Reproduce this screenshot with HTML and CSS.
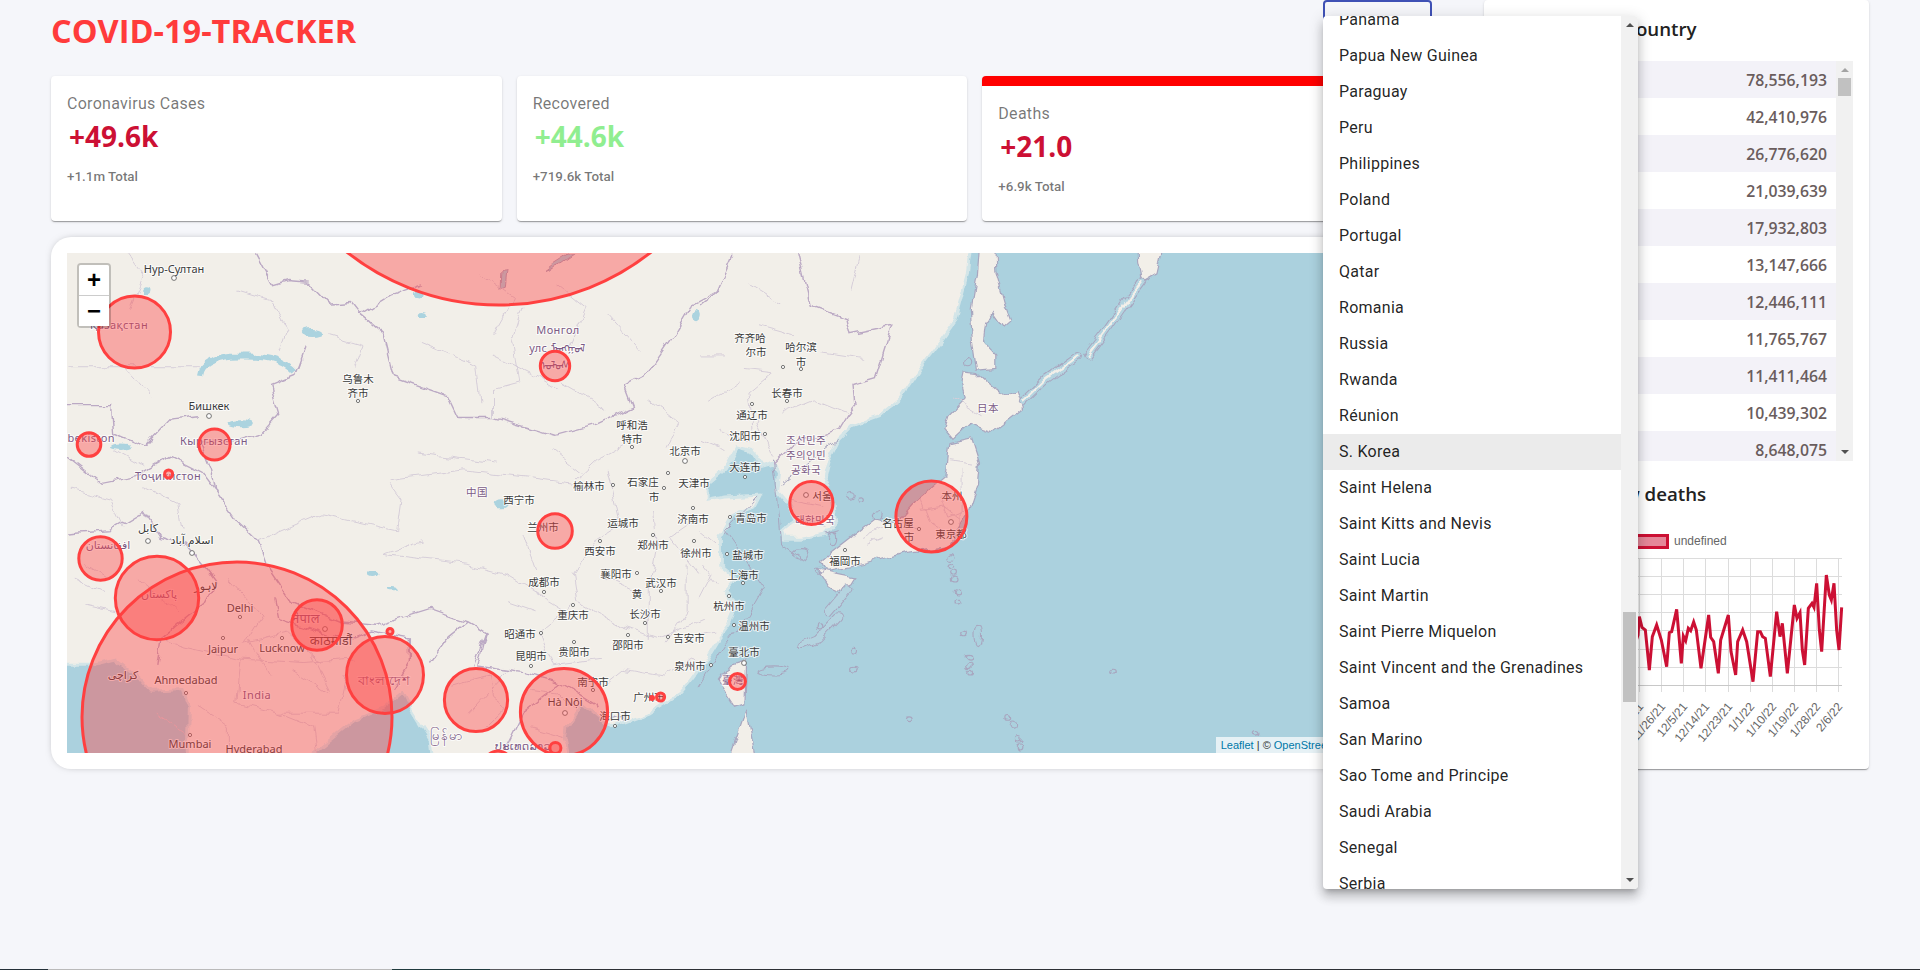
FILE: index.html
```html
<!DOCTYPE html>
<html lang="en">
<head>
<meta charset="utf-8">
<title>COVID-19 Tracker</title>
<link rel="stylesheet" href="styles.css">
</head>
<body>
<div class="app">
  <main class="left">
    <header class="header">
      <h1 class="title">COVID-19-TRACKER</h1>
      <div class="select-btn">Worldwide</div>
    </header>
    <section class="stats">
      <article class="card">
        <div class="card-label">Coronavirus Cases</div>
        <div class="card-num red">+49.6k</div>
        <div class="card-total">+1.1m Total</div>
      </article>
      <article class="card">
        <div class="card-label">Recovered</div>
        <div class="card-num green">+44.6k</div>
        <div class="card-total">+719.6k Total</div>
      </article>
      <article class="card card-active">
        <div class="card-label">Deaths</div>
        <div class="card-num red">+21.0</div>
        <div class="card-total">+6.9k Total</div>
      </article>
    </section>
    <section class="map-card">
      <div class="map">
        <svg class="map-svg" viewBox="0 0 1350 500" xmlns="http://www.w3.org/2000/svg">
          <defs>
            <filter id="wiggle" filterUnits="userSpaceOnUse" x="-30" y="-30" width="1410" height="560">
              <feTurbulence type="fractalNoise" baseFrequency=".07" numOctaves="2" seed="4" result="n"/>
              <feDisplacementMap in="SourceGraphic" in2="n" scale="9" xChannelSelector="R" yChannelSelector="G"/>
            </filter>
          </defs>
          <rect class="bg-land" x="-30" y="-30" width="1410" height="560"/>
          <g filter="url(#wiggle)">
          <!-- left half, geography -->
          <g transform="matrix(.4209 0 0 .338 -7 -13)">
            <path class="sea" d="M-80,1255 L80,1255 130,1240 190,1300 215,1335 290,1330 305,1380 300,1640 -80,1640Z"/>
            <path class="sea" d="M590,1640 L590,1530 700,1420 770,1385 815,1340 835,1390 880,1480 895,1640Z"/>
            <path class="lake-line" d="M335,402 Q340,345 430,345 Q520,340 558,392"/>
            <ellipse class="lake" cx="428" cy="542" rx="30" ry="12"/>
            <ellipse class="lake" cx="600" cy="272" rx="28" ry="12"/>
            <ellipse class="lake" cx="850" cy="162" rx="14" ry="14"/>
            <ellipse class="lake" cx="862" cy="218" rx="12" ry="8"/>
            <ellipse class="lake" cx="1512" cy="225" rx="8" ry="18"/>
            <ellipse class="lake" cx="1050" cy="782" rx="16" ry="12"/>
            <ellipse class="lake" cx="742" cy="990" rx="12" ry="10"/>
            <ellipse class="lake" cx="790" cy="1030" rx="12" ry="6"/>
            <ellipse class="lake" cx="145" cy="610" rx="24" ry="8"/>
            <ellipse class="lake" cx="205" cy="150" rx="10" ry="10"/>
            <path class="baikal" d="M1150,90 L1190,70 1225,40 1205,42 1170,70Z"/>
            <path class="baikal" d="M1050,90 L1062,88 1058,140 1048,145Z"/>
            <path class="land" d="M1285,1425 L1335,1405 1345,1450 1320,1500 1285,1500Z"/>
            <path class="border-main" d="M465,38 L505,132 540,120 590,125 640,190 690,185 712,220 790,160 860,130"/>
            <path class="border-main" d="M712,220 L770,280 795,405 920,460 945,525 1030,525 1175,578 1275,545 1360,495 1340,430 1400,390 1460,280 1500,195 1568,150"/>
            <path class="border-main" d="M585,315 L560,400 500,430 520,515 480,570 415,595 335,600 360,680 370,740 420,830 470,890 490,960 550,1070 670,1130 750,1140 880,1090 970,1130 1010,1160 980,1260"/>
            <path class="border-main" d="M17,490 L120,490 125,570 200,610 260,530 330,520"/>
            <path class="border-main" d="M17,640 L100,720 180,700 260,640 340,690 370,740"/>
            <path class="border-main" d="M17,870 L120,860 200,800 240,880 300,900 340,960 370,1010 340,1080 240,1180 230,1260"/>
            <path class="border-main" d="M510,1060 L520,1120 640,1170 700,1180 740,1160 830,1180 830,1250 790,1330"/>
            <path class="border-main" d="M880,1250 L920,1180 970,1130"/>
            <path class="border-main" d="M1010,1160 L990,1260 1100,1280 1190,1310 1280,1380"/>
            <path class="border-main" d="M1060,1500 L1100,1400 1190,1310"/>
            <path class="border-thin" d="M20,375 L330,375 M155,380 L220,470 M970,1400 L1060,1280 M1030,525 L1030,440 1090,420 1075,300 1100,200 M855,300 L990,370 1000,480 M780,710 L960,680 1100,700 1220,720 1280,650 1340,610 M850,630 L1040,660 M780,720 L810,770 800,860 620,810 470,890 M860,890 L770,930 970,960 1060,990 1190,1090 M1300,680 L1330,840 1280,880 1220,990 1230,1070 1330,1140 1420,1180 1530,1120 M1410,800 L1420,910 1400,1040 1400,1180 M1220,1080 L1140,1160 1170,1260 1290,1240 M30,1000 L100,1040 M130,1100 L60,1080 M400,1000 L480,1110 440,1190 540,1160 620,1250 M240,1180 L290,1200 430,1240 580,1250 700,1240 M430,1240 L420,1370 520,1400 660,1400 680,1290 M520,1400 L600,1440 610,1517 M330,1380 L400,1440 400,1517 M600,1230 L640,1330"/>
            <path class="border-thin" d="M1300,1310 L1340,1270 1430,1290 1500,1240 1540,1270 M1490,960 L1490,1100 1440,1190"/>
            <path class="border-thin" d="M1120,1330 L1180,1340 1230,1400 M930,1320 L1020,1290 1030,1350 1060,1380 1010,1440 M1120,1440 L1200,1470"/>
            <path class="border-thin" d="M420,150 L500,180 540,260 520,330 M160,40 L200,110 170,200 M640,280 L720,310 700,380 M1000,100 L1080,170 1030,280 M1180,130 L1250,200 1210,320 M1300,220 L1380,330 M1030,340 L1130,400 1180,440 M1190,420 L1300,500 M1400,470 L1470,540 1440,620 M1170,620 L1240,690 M30,740 L120,770 150,850 M200,730 L280,780 290,860 M130,620 L200,670 M1100,870 L1130,980 M1060,1070 L1130,1100 M1300,1000 L1390,1050 M1520,820 L1450,880 1520,990 M60,960 L110,1000 M180,1000 L280,1100 M550,1270 L640,1340 M450,1180 L500,1290 M230,1400 L300,1460"/>
          </g>
          <!-- right half, geography -->
          <g transform="matrix(.408 0 0 .338 633 -13)">
            <path class="sea" d="M662,-60 L662,30 655,100 640,170 625,240 590,300 545,370 490,470 440,520 375,548 340,590 315,650 305,700 325,760 335,835 310,870 250,885 205,885 200,860 235,825 215,780 190,745 195,690 180,660 150,670 125,625 90,615 60,680 20,720 20,770 60,760 145,755 130,790 80,815 50,880 50,960 90,1000 60,1040 90,1080 70,1140 40,1190 10,1250 -20,1300 -52,1345 -124,1400 -217,1440 -258,1400 -290,1370 -325,1440 -330,1470 -300,1640 1800,1640 1800,-60Z"/>
            <path class="maritime" d="M0,1320 L60,1200 120,1110 158,1030 60,860 140,760 M340,590 L200,720 M180,650 L190,760 200,900 250,945 M310,870 L340,860"/>
            <path class="land" d="M720,-60 L725,90 750,200 762,240 745,258 720,215 700,250 695,300 725,340 725,380 680,385 670,300 665,200 680,100 690,-60Z"/>
            <path class="land" d="M645,390 L680,395 740,460 775,445 790,500 715,570 660,545 620,590 600,560 610,520 650,470 640,420Z"/>
            <path class="land" d="M610,600 L665,585 685,660 680,720 650,830 610,910 500,925 400,960 310,980 300,945 370,880 430,825 480,840 530,770 600,700Z"/>
            <path class="land" d="M320,985 L380,1000 370,1020 340,1040 320,1030 290,975Z"/>
            <path class="land" d="M1070,-60 L1150,-60 1120,100 1085,125 1075,60Z"/>
            <path class="land" d="M75,1255 L115,1240 110,1370 85,1380 45,1305Z"/>
            <path class="land" d="M75,1640 L75,1530 115,1390 135,1530 135,1640Z"/>
            <path class="island-out" d="M790,480 L850,410 925,345 M950,340 L1000,260 1040,190 1080,125 M360,1035 L315,1100 M340,1115 L290,1180 250,1200"/>
            <path class="island-sea" d="M790,480 L850,410 925,345 M950,340 L1000,260 1040,190 1080,125 M360,1035 L315,1100 M340,1115 L290,1180 250,1200"/>
            <path class="island-in" d="M790,480 L850,410 925,345 M950,340 L1000,260 1040,190 1080,125"/>
            <path class="border-main" d="M0,195 L40,160 80,50 75,-60 M240,-60 L240,38 270,190 360,230 370,280 470,255 430,410 375,430 380,490 360,520 340,560 300,580 230,600 180,660"/>
            <path class="border-thin" d="M0,340 L60,340 M110,380 L180,390 120,450 130,560 M200,510 L280,470 360,510 M390,50 L370,150 M640,680 L640,850 M540,800 L600,790 640,830 M400,880 L450,850 M0,860 L40,900 M0,590 L60,620 M30,990 L0,1060 M0,1170 L40,1160"/>
            <path class="border-thin" d="M540,770 L560,830 600,860 M590,760 L610,820 650,800 M500,830 L540,860 M410,900 L450,880 M215,770 L300,790 M240,830 L310,850 M620,470 L690,520 M610,650 L670,660 M120,130 L200,190 M20,480 L100,420 M140,250 L230,280 M290,330 L400,350 M140,530 L180,640 M50,560 L120,600 M0,960 L40,1020"/>
            <g class="isles">
              <ellipse cx="367" cy="757" rx="11" ry="10"/><ellipse cx="395" cy="768" rx="8" ry="8"/><ellipse cx="432" cy="812" rx="12" ry="14"/>
              <ellipse cx="615" cy="938" rx="10" ry="10"/><ellipse cx="615" cy="965" rx="7" ry="8"/><ellipse cx="619" cy="987" rx="7" ry="8"/><ellipse cx="623" cy="1005" rx="7" ry="7"/>
              <ellipse cx="630" cy="1042" rx="7" ry="8"/><ellipse cx="631" cy="1070" rx="6" ry="7"/><ellipse cx="646" cy="1167" rx="7" ry="7"/><ellipse cx="682" cy="1170" rx="8" ry="30"/>
              <ellipse cx="378" cy="1218" rx="8" ry="10"/><ellipse cx="376" cy="1271" rx="7" ry="7"/><ellipse cx="657" cy="1236" rx="7" ry="7"/><ellipse cx="658" cy="1260" rx="7" ry="8"/><ellipse cx="662" cy="1280" rx="6" ry="7"/>
              <ellipse cx="1011" cy="1277" rx="7" ry="7"/><ellipse cx="513" cy="1418" rx="7" ry="7"/><ellipse cx="758" cy="1414" rx="6" ry="7"/><ellipse cx="768" cy="1438" rx="8" ry="12"/><ellipse cx="780" cy="1477" rx="7" ry="8"/><ellipse cx="782" cy="1500" rx="7" ry="9"/>
              <ellipse cx="1363" cy="1458" rx="7" ry="7"/><ellipse cx="180" cy="1272" rx="40" ry="12"/><ellipse cx="294" cy="1143" rx="7" ry="8"/><ellipse cx="656" cy="360" rx="10" ry="12"/><ellipse cx="245" cy="930" rx="18" ry="14"/><ellipse cx="325" cy="885" rx="10" ry="20"/><ellipse cx="295" cy="980" rx="10" ry="12"/>
            </g>
          </g>
          </g>
          <!-- labels -->
          <g class="cities">
            <text x="107" y="20">Нур-Султан</text><text x="142" y="157">Бишкек</text>
            <text x="173" y="359">Delhi</text><text x="156" y="400">Jaipur</text><text x="215" y="399">Lucknow</text><text x="119" y="431">Ahmedabad</text><text x="123" y="495">Mumbai</text><text x="187" y="500">Hyderabad</text>
            <text x="81" y="279">كابل</text><text x="125" y="291">اسلام آباد</text><text x="139" y="337">لاہور</text><text x="56" y="426">کراچی</text><text class="big" x="264" y="392">काठमाडौं</text>
            <text x="498" y="453">Hà Nội</text>
          </g>
          <g class="cities cjk">
            <text x="291" y="130">乌鲁木</text><text x="291" y="144">齐市</text><text x="565" y="176">呼和浩</text><text x="565" y="190">特市</text><text x="618" y="202">北京市</text><text x="522" y="237">榆林市</text><text x="576" y="233">石家庄</text><text x="587" y="248">市</text><text x="627" y="234">天津市</text><text x="452" y="251">西宁市</text><text x="476" y="278">兰州市</text><text x="556" y="274">运城市</text><text x="626" y="270">济南市</text><text x="586" y="296">郑州市</text><text x="533" y="302">西安市</text><text x="629" y="304">徐州市</text><text x="549" y="325">襄阳市</text><text x="594" y="334">武汉市</text><text x="570" y="345">黄</text><text x="477" y="333">成都市</text><text x="506" y="366">重庆市</text><text x="578" y="365">长沙市</text><text x="453" y="385">昭通市</text><text x="622" y="389">吉安市</text><text x="561" y="396">邵阳市</text><text x="464" y="407">昆明市</text><text x="507" y="403">贵阳市</text><text x="623" y="417">泉州市</text><text x="526" y="433">南宁市</text><text x="582" y="448">广州市</text><text x="548" y="467">海口市</text>
            <text x="683" y="89">齐齐哈</text><text x="689" y="103">尔市</text><text x="734" y="98">哈尔滨</text><text x="734" y="113">市</text><text x="720" y="144">长春市</text><text x="685" y="166">通辽市</text><text x="678" y="187">沈阳市</text><text x="678" y="218">大连市</text><text x="755" y="247">서울</text><text x="684" y="269">青岛市</text><text x="681" y="306">盐城市</text><text x="676" y="326">上海市</text><text x="662" y="357">杭州市</text><text x="687" y="377">温州市</text><text x="677" y="403">臺北市</text><text x="778" y="312">福岡市</text><text x="831" y="274">名古屋</text><text x="842" y="288">市</text><text x="885" y="247">本州</text><text x="884" y="285">東京都</text>
          </g>
          <g class="countries">
            <text x="52" y="76">Қазақстан</text><text x="491" y="81">Монгол</text><text x="490" y="99">улс ᠮᠤᠩᠭᠤᠯ</text><text x="488" y="116">ᠤᠯᠤᠰ</text><text x="147" y="192">Кыргызстан</text><text class="end" x="48" y="189">Oʻzbekiston</text><text x="101" y="227">Тоҷикистон</text><text x="41" y="296">افغانستان</text><text x="92" y="345">پاکستان</text><text class="big" x="239" y="370">नेपाल</text><text class="big" x="317" y="432">বাংলাদেশ</text><text x="190" y="446">India</text><text class="big" x="380" y="487">မြန်မာ</text><text x="456" y="497">ປະເທດລາວ</text>
          </g>
          <g class="countries cjk">
            <text x="410" y="243">中国</text><text x="739" y="191">조선민주</text><text x="739" y="206">주의인민</text><text x="739" y="221">공화국</text><text x="748" y="271">대한민국</text><text x="666" y="431">臺灣</text><text x="921" y="159">日本</text>
          </g>
          <g class="dots">
            <circle cx="107" cy="25" r="2.4"/><circle cx="142" cy="163" r="2.4"/><circle cx="618" cy="208" r="2.4"/><circle cx="291" cy="148" r="1.6"/><circle cx="565" cy="194" r="1.6"/><circle cx="81" cy="288" r="2.4"/><circle cx="125" cy="300" r="2.4"/><circle cx="173" cy="364" r="1.6"/><circle cx="156" cy="385" r="1.6"/><circle cx="215" cy="385" r="1.6"/><circle cx="119" cy="440" r="1.6"/><circle cx="123" cy="482" r="1.6"/><circle cx="258" cy="376" r="2.4"/><circle cx="498" cy="460" r="2.4"/><circle cx="739" cy="242" r="2.4"/><circle cx="884" cy="269" r="2.4"/><circle cx="677" cy="410" r="2.4"/><circle cx="716" cy="114" r="1.6"/><circle cx="734" cy="116" r="1.6"/><circle cx="720" cy="148" r="1.6"/><circle cx="685" cy="151" r="1.6"/><circle cx="698" cy="181" r="1.6"/><circle cx="678" cy="224" r="1.6"/><circle cx="663" cy="264" r="1.6"/><circle cx="660" cy="301" r="1.6"/><circle cx="676" cy="330" r="1.6"/><circle cx="662" cy="343" r="1.6"/><circle cx="667" cy="372" r="1.6"/><circle cx="778" cy="297" r="1.6"/><circle cx="852" cy="276" r="1.6"/><circle cx="601" cy="220" r="1.6"/><circle cx="546" cy="232" r="1.6"/><circle cx="597" cy="235" r="1.6"/><circle cx="626" cy="255" r="1.6"/><circle cx="586" cy="282" r="1.6"/><circle cx="533" cy="288" r="1.6"/><circle cx="627" cy="288" r="1.6"/><circle cx="570" cy="320" r="1.6"/><circle cx="594" cy="338" r="1.6"/><circle cx="477" cy="339" r="1.6"/><circle cx="506" cy="352" r="1.6"/><circle cx="578" cy="370" r="1.6"/><circle cx="474" cy="380" r="1.6"/><circle cx="601" cy="384" r="1.6"/><circle cx="561" cy="382" r="1.6"/><circle cx="464" cy="413" r="1.6"/><circle cx="507" cy="389" r="1.6"/><circle cx="644" cy="412" r="1.6"/><circle cx="526" cy="437" r="1.6"/><circle cx="548" cy="473" r="1.6"/>
          </g>
          <!-- case circles -->
          <g class="bubbles">
            <circle cx="432" cy="-193" r="245"/><circle cx="170" cy="464" r="155"/><circle cx="67.5" cy="79" r="36"/><circle cx="488" cy="113" r="14.7"/><circle cx="22" cy="191.5" r="11.8"/><circle cx="147.5" cy="191.5" r="15.6"/><circle cx="101.6" cy="221" r="4"/><circle cx="33.5" cy="305.5" r="21.7"/><circle cx="90" cy="345" r="41.7"/><circle cx="250" cy="372" r="25.3"/><circle cx="323" cy="378.5" r="3"/><circle cx="318" cy="422" r="38.5"/><circle cx="409" cy="447" r="31.6"/><circle cx="497" cy="459" r="43.6"/><circle cx="488.4" cy="495" r="5.5"/><circle cx="431" cy="512" r="14"/><circle cx="488" cy="278" r="17.3"/><circle cx="593.6" cy="444" r="4"/><circle cx="585" cy="445" r="1.5"/><circle cx="744.4" cy="250" r="21.6"/><circle cx="864.4" cy="263.5" r="35.5"/><circle cx="670.5" cy="428.5" r="8"/>
          </g>
        </svg>
        <div class="zoom">
          <div class="zoom-btn zoom-in">+</div>
          <div class="zoom-btn">−</div>
        </div>
        <div class="attribution"><span class="link">Leaflet</span> | © <span class="link">OpenStreetMap</span> contributors</div>
      </div>
    </section>
  </main>

  <aside class="side">
    <h3 class="side-title">Live Cases by Country</h3>
    <div class="table-wrap">
      <div class="table">
        <div class="row"><span>USA</span><strong>78,556,193</strong></div>
        <div class="row"><span>India</span><strong>42,410,976</strong></div>
        <div class="row"><span>Brazil</span><strong>26,776,620</strong></div>
        <div class="row"><span>France</span><strong>21,039,639</strong></div>
        <div class="row"><span>UK</span><strong>17,932,803</strong></div>
        <div class="row"><span>Russia</span><strong>13,147,666</strong></div>
        <div class="row"><span>Turkey</span><strong>12,446,111</strong></div>
        <div class="row"><span>Italy</span><strong>11,765,767</strong></div>
        <div class="row"><span>Germany</span><strong>11,411,464</strong></div>
        <div class="row"><span>Spain</span><strong>10,439,302</strong></div>
        <div class="row"><span>Argentina</span><strong>8,648,075</strong></div>
      </div>
      <div class="scrollbar">
        <i class="arrow-up"></i>
        <i class="thumb table-thumb"></i>
        <i class="arrow-down"></i>
      </div>
    </div>
    <h3 class="side-title second">Worldwide new deaths</h3>
    <svg class="chart" viewBox="0 0 353 225" xmlns="http://www.w3.org/2000/svg">
      <rect class="swatch" x="129" y="15.5" width="38.5" height="12"/>
      <text class="legend" x="174" y="25">undefined</text>
      <path class="grid" d="M48,38.5H342M48,56.5H342M48,74.5H342M48,92.5H342M48,110.5H342M48,129.5H342M48,147.5H342"/>
      <path class="grid" d="M51.5,38V172M73.5,38V172M95.5,38V172M117.5,38V172M139.5,38V172M161.5,38V172M183.5,38V172M205.5,38V172M228.5,38V172M250.5,38V172M272.5,38V172M294.5,38V172M316.5,38V172M338.5,38V172"/>
      <path class="axis" d="M48,165.5H342"/>
      <g transform="translate(120 0) scale(.33333)">
        <path class="line" d="M-200,380 L-140,300 -90,430 -40,320 0,400 30,420 54,345 58,290 66,322 76,330 88,450 97,350 110,315 124,360 140,440 148,338 155,335 170,268 184,430 190,348 197,362 205,325 212,332 221,306 229,330 243,445 266,285 272,352 281,365 295,460 302,360 325,285 333,395 347,465 353,365 368,330 380,365 399,485 413,335 421,335 428,350 436,355 451,470 470,275 480,350 487,310 502,460 523,255 531,295 540,278 547,390 554,435 565,265 576,250 582,262 590,190 598,330 605,395 619,165 628,225 634,240 642,190 650,330 657,390 665,262"/>
      </g>
      <g class="ticks">
        <text transform="translate(144 187) rotate(-50)">11/17/21</text>
        <text transform="translate(166 187) rotate(-50)">11/26/21</text>
        <text transform="translate(188 187) rotate(-50)">12/5/21</text>
        <text transform="translate(210 187) rotate(-50)">12/14/21</text>
        <text transform="translate(233 187) rotate(-50)">12/23/21</text>
        <text transform="translate(255 187) rotate(-50)">1/1/22</text>
        <text transform="translate(277 187) rotate(-50)">1/10/22</text>
        <text transform="translate(299 187) rotate(-50)">1/19/22</text>
        <text transform="translate(321 187) rotate(-50)">1/28/22</text>
        <text transform="translate(343 187) rotate(-50)">2/6/22</text>
      </g>
    </svg>
  </aside>
</div>

<div class="strip">
  <i class="seg seg-a"></i><i class="seg seg-b"></i><i class="seg seg-c"></i><i class="seg seg-d"></i><i class="seg seg-e"></i>
</div>

<div class="menu">
  <div class="menu-list">
    <ul class="menu-items">
      <li>Panama</li><li>Papua New Guinea</li><li>Paraguay</li><li>Peru</li><li>Philippines</li><li>Poland</li><li>Portugal</li><li>Qatar</li><li>Romania</li><li>Russia</li><li>Rwanda</li><li>Réunion</li><li class="hover">S. Korea</li><li>Saint Helena</li><li>Saint Kitts and Nevis</li><li>Saint Lucia</li><li>Saint Martin</li><li>Saint Pierre Miquelon</li><li>Saint Vincent and the Grenadines</li><li>Samoa</li><li>San Marino</li><li>Sao Tome and Principe</li><li>Saudi Arabia</li><li>Senegal</li><li>Serbia</li>
    </ul>
  </div>
  <div class="scrollbar menu-bar">
    <i class="arrow-up"></i>
    <i class="thumb menu-thumb"></i>
    <i class="arrow-down"></i>
  </div>
</div>
</body>
</html>
```

FILE: styles.css
```css
* { box-sizing: border-box; }
html, body { margin: 0; padding: 0; height: 970px; overflow: hidden; }
body { background: #f5f6fa; font-family: Roboto, "Liberation Sans", sans-serif; display: flex; flex-direction: column; }

.app { flex: 1; display: flex; gap: 51px; padding: 0 51px; min-height: 0; }
.left { flex: 1; min-width: 0; }

.header { height: 76px; display: flex; justify-content: space-between; align-items: flex-start; }
.title { margin: 11px 0 0; font-family: "Open Sans", sans-serif; font-size: 32.5px; line-height: 40px; font-weight: 700; color: #ff3b3b; }
.select-btn { width: 109px; height: 56px; margin-right: 1px; border: 2px solid #3f51b5; border-radius: 4px; padding: 16px 12px; font-size: 16px; color: #222; }

.stats { display: flex; gap: 15px; }
.card { flex: 1; height: 145px; background: #fff; border-radius: 4px; padding: 16px; box-shadow: 0 2px 1px -1px rgba(0,0,0,.2), 0 1px 1px 0 rgba(0,0,0,.14), 0 1px 3px 0 rgba(0,0,0,.12); }
.card-active { border-top: 10px solid #f00; }
.card-label { font-size: 16px; line-height: 24px; color: rgba(0,0,0,.54); letter-spacing: .28px; }
.card-num { font-family: "Open Sans", sans-serif; font-weight: 700; font-size: 28px; line-height: 38px; margin: 1px 0 0 2px; }
.red { color: #cc1034; }
.green { color: #90ee90; }
.card-total { margin-top: 12px; font-size: 13.4px; line-height: 20px; font-weight: 500; color: rgba(0,0,0,.54); letter-spacing: 0; }

.map-card { margin-top: 16px; height: 532px; background: #fff; border-radius: 20px; padding: 16px; box-shadow: 0 0 8px -4px rgba(0,0,0,.5); }
.map { position: relative; height: 500px; overflow: hidden; background: #aad3df; }
.map-svg { display: block; width: 100%; height: 500px; }
.bg-land { fill: #f2efe9; }
.sea { fill: #abd1de; stroke: #d3e5e8; stroke-width: 3; vector-effect: non-scaling-stroke; }
.lake { fill: #abd3df; }
.lake-line { fill: none; stroke: #abd3df; stroke-width: 6; vector-effect: non-scaling-stroke; }
.baikal { fill: #abd3df; stroke: #a99fb8; vector-effect: non-scaling-stroke; }
.land { fill: #f2efe9; stroke: #a8a6bf; stroke-width: 1.2; vector-effect: non-scaling-stroke; }
.maritime { fill: none; stroke: #a8a6bf; stroke-width: 1; vector-effect: non-scaling-stroke; }
.island-out { fill: none; stroke: #a8a6bf; stroke-width: 9; stroke-linecap: round; vector-effect: non-scaling-stroke; }
.island-sea { fill: none; stroke: #b4d4e0; stroke-width: 7; stroke-linecap: round; vector-effect: non-scaling-stroke; }
.island-in { fill: none; stroke: #f2efe9; stroke-width: 2.5; stroke-linecap: round; vector-effect: non-scaling-stroke; }
.border-main { fill: none; stroke: #bba9c4; stroke-width: 1.4; vector-effect: non-scaling-stroke; }
.border-thin { fill: none; stroke: #d6ced9; stroke-width: 1; vector-effect: non-scaling-stroke; }
.isles ellipse { fill: none; stroke: #a8a6bf; stroke-width: 1.1; vector-effect: non-scaling-stroke; }
.cities text, .countries text { font-family: "Noto Sans", "DejaVu Sans", sans-serif; font-size: 11px; text-anchor: middle; paint-order: stroke; stroke: rgba(255,255,255,.75); stroke-width: 2px; stroke-linejoin: round; }
.cities text.big, .countries text.big { font-size: 13px; }
.cjk text { font-family: "Noto Sans CJK SC", "Noto Sans CJK KR", sans-serif; font-size: 10.5px; }
.cities text { fill: #3a3a3a; }
.countries text { fill: #7b5a85; letter-spacing: .4px; }
.countries text.end { text-anchor: end; }
.dots circle { fill: #fff; stroke: #555; stroke-width: .8; }
.bubbles circle { fill: #ff4040; fill-opacity: .4; stroke: #ff4040; stroke-width: 3; }

.zoom { position: absolute; left: 10px; top: 10px; width: 34px; border: 2px solid rgba(0,0,0,.2); border-radius: 4px; background-clip: padding-box; }
.zoom-btn { height: 30px; background: #fff; color: #000; font: bold 24px/30px "Liberation Sans", sans-serif; text-align: center; }
.zoom-in { border-bottom: 1px solid #ccc; height: 31px; border-radius: 2px 2px 0 0; }
.attribution { position: absolute; right: 0; bottom: 0; padding: 0 5px; background: rgba(255,255,255,.7); color: #333; font: 11px/16px "Liberation Sans", sans-serif; }
.link { color: #0078a8; }

.side { width: 385px; height: 769px; background: #fff; border-radius: 4px; padding: 15px 16px 16px; box-shadow: 0 2px 1px -1px rgba(0,0,0,.2), 0 1px 1px 0 rgba(0,0,0,.14), 0 1px 3px 0 rgba(0,0,0,.12); }
.side-title { margin: 0 0 18px; font-family: "Open Sans", sans-serif; font-size: 18.72px; line-height: 28px; font-weight: 600; color: #222; }
.side-title.second { margin: 19px 0 12px; }
.table-wrap { display: flex; height: 400px; overflow: hidden; }
.table { flex: 1; min-width: 0; }
.row { height: 37px; display: flex; justify-content: space-between; align-items: center; padding: 0 9px; font-family: "Open Sans", sans-serif; font-size: 15.8px; color: #6a5d5d; }
.row:nth-child(odd) { background: #f3f2f8; }
.row strong { font-weight: 600; }

.scrollbar { flex: none; width: 17px; background: #f1f1f1; display: flex; flex-direction: column; align-items: center; }
.arrow-up, .arrow-down { flex: none; width: 0; height: 0; border-left: 4px solid transparent; border-right: 4px solid transparent; }
.arrow-up { margin-top: 7px; border-bottom: 4px solid #a3a3a3; }
.arrow-down { margin-top: auto; margin-bottom: 7px; border-top: 4px solid #505050; }
.thumb { flex: none; width: 13px; background: #c1c1c1; }
.table-thumb { height: 18px; margin-top: 6px; }
.menu-bar .arrow-up { border-bottom-color: #505050; }
.menu-thumb { height: 90px; margin-top: 585px; }

.chart { display: block; width: 353px; height: 225px; }
.swatch { fill: rgba(204,16,52,.5); stroke: #cc1034; stroke-width: 3; }
.legend, .ticks text { font-family: "Liberation Sans", sans-serif; font-size: 12px; fill: #666; }
.ticks text { text-anchor: end; }
.grid { fill: none; stroke: #dcdcdc; stroke-width: 1; }
.axis { fill: none; stroke: #c8c8c8; stroke-width: 1; }
.line { fill: none; stroke: #cc1034; stroke-width: 3; stroke-linejoin: miter; vector-effect: non-scaling-stroke; }

.strip { flex: none; height: 1px; display: flex; }
.seg { display: block; height: 1px; }
.seg-a { width: 48px; background: #243038; }
.seg-b { width: 344px; background: #bababa; }
.seg-c { width: 98px; background: #1f3a3d; }
.seg-d { width: 50px; background: #5c5c60; }
.seg-e { flex: 1; background: #2d3035; }

.menu { position: absolute; left: 1323px; top: 16px; width: 315px; height: 873px; display: flex; background: #fff; border-radius: 4px; overflow: hidden; box-shadow: 0 5px 5px -3px rgba(0,0,0,.2), 0 8px 10px 1px rgba(0,0,0,.14), 0 3px 14px 2px rgba(0,0,0,.12); }
.menu-list { flex: 1; min-width: 0; overflow: hidden; }
.menu-items { list-style: none; margin: -14px 0 0; padding: 0; }
.menu-items li { height: 36px; line-height: 36px; padding: 0 16px; font-size: 16px; letter-spacing: .27px; color: rgba(0,0,0,.87); white-space: nowrap; }
.menu-items li.hover { background: #ebebeb; }
```
